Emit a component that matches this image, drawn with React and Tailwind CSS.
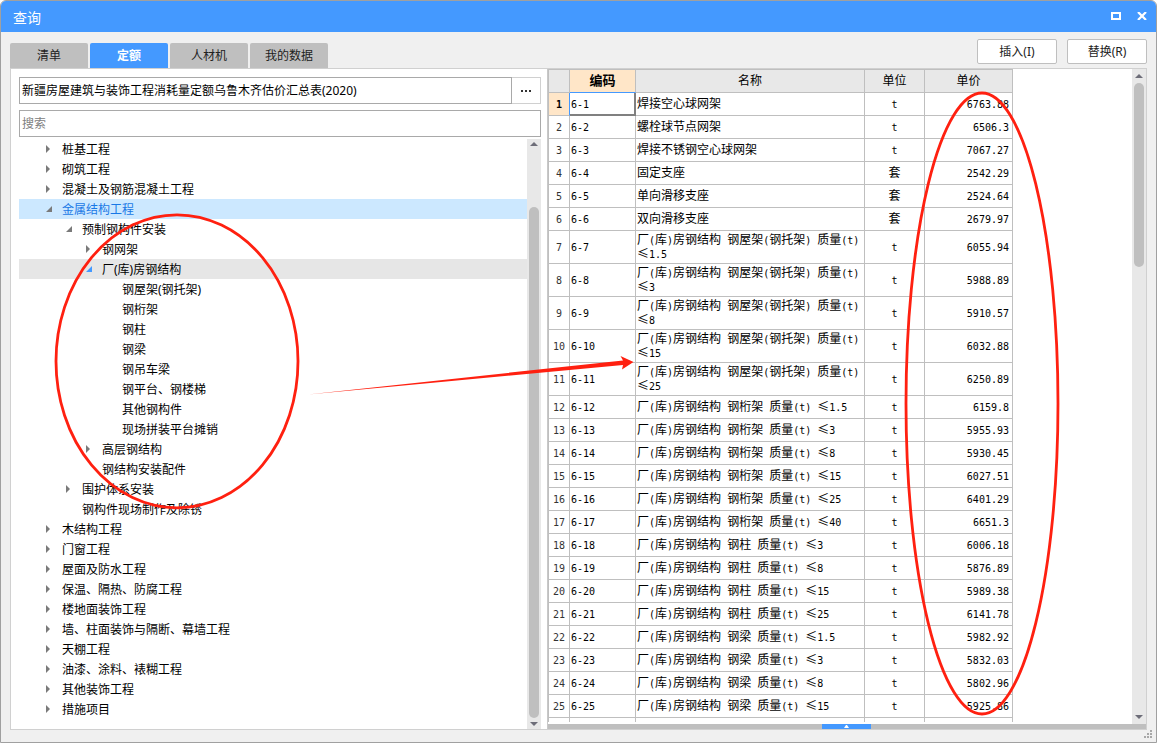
import { Fragment, useState } from 'react';

const TABS = ['清单', '定额', '人材机', '我的数据'];

// state: 'closed' | 'open' | undefined (leaf)
const TREE = [
    { label: '桩基工程', level: 0, state: 'closed' },
    { label: '砌筑工程', level: 0, state: 'closed' },
    { label: '混凝土及钢筋混凝土工程', level: 0, state: 'closed' },
    { label: '金属结构工程', level: 0, state: 'open' },
    { label: '预制钢构件安装', level: 1, state: 'open' },
    { label: '钢网架', level: 2, state: 'closed' },
    { label: '厂(库)房钢结构', level: 2, state: 'open' },
    { label: '钢屋架(钢托架)', level: 3 },
    { label: '钢桁架', level: 3 },
    { label: '钢柱', level: 3 },
    { label: '钢梁', level: 3 },
    { label: '钢吊车梁', level: 3 },
    { label: '钢平台、钢楼梯', level: 3 },
    { label: '其他钢构件', level: 3 },
    { label: '现场拼装平台摊销', level: 3 },
    { label: '高层钢结构', level: 2, state: 'closed' },
    { label: '钢结构安装配件', level: 2 },
    { label: '围护体系安装', level: 1, state: 'closed' },
    { label: '钢构件现场制作及除锈', level: 1 },
    { label: '木结构工程', level: 0, state: 'closed' },
    { label: '门窗工程', level: 0, state: 'closed' },
    { label: '屋面及防水工程', level: 0, state: 'closed' },
    { label: '保温、隔热、防腐工程', level: 0, state: 'closed' },
    { label: '楼地面装饰工程', level: 0, state: 'closed' },
    { label: '墙、柱面装饰与隔断、幕墙工程', level: 0, state: 'closed' },
    { label: '天棚工程', level: 0, state: 'closed' },
    { label: '油漆、涂料、裱糊工程', level: 0, state: 'closed' },
    { label: '其他装饰工程', level: 0, state: 'closed' },
    { label: '措施项目', level: 0, state: 'closed' },
];

const INDENT = ['pl-[26px]', 'pl-[46px]', 'pl-[66px]', 'pl-[86px]'];

const ROWS = [
    ['焊接空心球网架', 't', '6763.88'],
    ['螺栓球节点网架', 't', '6506.3'],
    ['焊接不锈钢空心球网架', 't', '7067.27'],
    ['固定支座', '套', '2542.29'],
    ['单向滑移支座', '套', '2524.64'],
    ['双向滑移支座', '套', '2679.97'],
    ['厂(库)房钢结构 钢屋架(钢托架) 质量(t) ≤1.5', 't', '6055.94'],
    ['厂(库)房钢结构 钢屋架(钢托架) 质量(t) ≤3', 't', '5988.89'],
    ['厂(库)房钢结构 钢屋架(钢托架) 质量(t) ≤8', 't', '5910.57'],
    ['厂(库)房钢结构 钢屋架(钢托架) 质量(t) ≤15', 't', '6032.88'],
    ['厂(库)房钢结构 钢屋架(钢托架) 质量(t) ≤25', 't', '6250.89'],
    ['厂(库)房钢结构 钢桁架 质量(t) ≤1.5', 't', '6159.8'],
    ['厂(库)房钢结构 钢桁架 质量(t) ≤3', 't', '5955.93'],
    ['厂(库)房钢结构 钢桁架 质量(t) ≤8', 't', '5930.45'],
    ['厂(库)房钢结构 钢桁架 质量(t) ≤15', 't', '6027.51'],
    ['厂(库)房钢结构 钢桁架 质量(t) ≤25', 't', '6401.29'],
    ['厂(库)房钢结构 钢桁架 质量(t) ≤40', 't', '6651.3'],
    ['厂(库)房钢结构 钢柱 质量(t) ≤3', 't', '6006.18'],
    ['厂(库)房钢结构 钢柱 质量(t) ≤8', 't', '5876.89'],
    ['厂(库)房钢结构 钢柱 质量(t) ≤15', 't', '5989.38'],
    ['厂(库)房钢结构 钢柱 质量(t) ≤25', 't', '6141.78'],
    ['厂(库)房钢结构 钢梁 质量(t) ≤1.5', 't', '5982.92'],
    ['厂(库)房钢结构 钢梁 质量(t) ≤3', 't', '5832.03'],
    ['厂(库)房钢结构 钢梁 质量(t) ≤8', 't', '5802.96'],
    ['厂(库)房钢结构 钢梁 质量(t) ≤15', 't', '5925.86'],
];

// Half-width runs use a monospaced face at half the CJK advance,
// the ≤ sign takes the full-width CJK form
function GridText({ text }) {
    return text.split(/([\x20-\x7e]+|≤)/).map((part, i) => {
        if (part === '≤') return <span key={i} className="font-['Noto_Sans_CJK_SC',sans-serif] leading-none">{part}</span>;
        if (i % 2) return <span key={i} className="font-['DejaVu_Sans_Mono',monospace] text-[10px] leading-none">{part}</span>;
        return <Fragment key={i}>{part}</Fragment>;
    });
}

function TreeArrow({ state, active }) {
    return (
        <svg width="8" height="8" viewBox="0 0 8 8" className="shrink-0" aria-hidden="true">
            {state === 'closed' && <path d="M1 0v8l4-4z" fill="#7a7a7a" />}
            {state === 'open' && <path d="M7 1v6H1z" fill={active ? '#4499ff' : '#7a7a7a'} />}
        </svg>
    );
}

function ScrollArrow({ down }) {
    return (
        <svg width="8" height="4" viewBox="0 0 8 4" className="shrink-0" aria-hidden="true">
            <path d={down ? 'M0 0h8L4 4z' : 'M0 4h8L4 0z'} fill="#6d6d78" />
        </svg>
    );
}

// ── Left side: library picker, search, chapter tree ───────────────────────
function LibraryPanel() {
    const [keyword, setKeyword] = useState('');

    return (
        <section className="flex w-[537px] shrink-0 flex-col border-r border-[#c8c8c8] pl-2 pr-[6px] pt-2">
            <div className="flex h-[27px] shrink-0">
                <input
                    aria-label="定额库"
                    readOnly
                    value="新疆房屋建筑与装饰工程消耗量定额乌鲁木齐估价汇总表(2020)"
                    className="min-w-0 flex-1 border border-[#a9a9a9] px-[2px] outline-none"
                />
                <button aria-label="选择定额库" className="flex w-[29px] items-center justify-center gap-[2px] border border-l-0 border-[#d0d0d0]">
                    <span className="size-[2px] bg-[#333]" />
                    <span className="size-[2px] bg-[#333]" />
                    <span className="size-[2px] bg-[#333]" />
                </button>
            </div>
            <input
                aria-label="搜索"
                placeholder="搜索"
                value={keyword}
                onChange={e => setKeyword(e.target.value)}
                className="mt-[6px] h-[27px] shrink-0 border border-[#a9a9a9] px-[2px] outline-none placeholder:text-[#808080]"
            />
            <div className="mt-[2px] flex min-h-0 flex-1">
                <ul className="min-w-0 flex-1 overflow-hidden">
                    {TREE.map((node, i) => (
                        <li key={node.label}>
                            <button
                                className={`flex h-5 w-full items-center gap-[9px] text-left hover:bg-[#e5e5e5] ${INDENT[node.level]} ${i === 3 ? 'bg-[#cce8ff] text-[#1a78e6]' : ''} ${i === 6 ? 'bg-[#e6e6e6]' : ''}`}
                            >
                                <TreeArrow state={node.state} active={i === 6} />
                                <span className="pt-[2px]">{node.label}</span>
                            </button>
                        </li>
                    ))}
                </ul>
                <div className="flex w-[14px] shrink-0 flex-col items-center bg-[#e8e8e8] py-[3px]">
                    <ScrollArrow />
                    <div className="mt-[61px] mb-1 w-[10px] flex-1 rounded-full bg-[#bfbfbf]" />
                    <ScrollArrow down />
                </div>
            </div>
        </section>
    );
}

// ── Right side: quota table ───────────────────────────────────────────────
function QuotaTable() {
    const th = 'border-r border-b border-[#bfbfbf] bg-[#e8e8e8] p-0 font-normal';
    const td = 'border-r border-b border-[#bfbfbf] p-0 pb-px';

    return (
        <section className="flex min-w-0 flex-1 flex-col">
            <div className="flex min-h-0 flex-1">
                <div className="mb-[2px] min-w-0 flex-1 overflow-hidden">
                    <table className="w-[465px] table-fixed border-separate border-spacing-0 border-t border-l border-[#bfbfbf] font-['Liberation_Sans','Noto_Sans_CJK_SC',sans-serif] leading-[14px]">
                        <colgroup>
                            <col className="w-[21px]" />
                            <col className="w-[66px]" />
                            <col className="w-[229px]" />
                            <col className="w-[60px]" />
                            <col className="w-[88px]" />
                        </colgroup>
                        <thead>
                            <tr className="h-[23px]">
                                <th className={th} aria-label="序号" />
                                <th className="border-r border-b border-r-[#bfbfbf] border-b-[#4499ff] bg-[#ffe6c8] p-0 text-[13px] font-bold">编码</th>
                                <th className={th}>名称</th>
                                <th className={th}>单位</th>
                                <th className={th}>单价</th>
                            </tr>
                        </thead>
                        <tbody>
                            {ROWS.map(([name, unit, price], i) => (
                                <tr key={i} className={name.includes('钢屋架') ? 'h-[33px]' : 'h-[23px]'}>
                                    <th
                                        scope="row"
                                        className={`border-r border-b p-0 pt-[2px] font-['DejaVu_Sans_Mono',monospace] text-[10px] leading-[14px] ${i === 0 ? 'border-r-[#4499ff] border-b-[#bfbfbf] bg-[#ffe6c8] font-bold' : 'border-[#bfbfbf] font-normal text-[#333]'}`}
                                    >
                                        {i + 1}
                                    </th>
                                    <td className={i === 0 ? 'border-r-2 border-b-2 border-[#808080] p-0 pl-[1px]' : `${td} pl-[1px]`}>
                                        <GridText text={`6-${i + 1}`} />
                                    </td>
                                    <td className={`${td} pl-[1px]`}><GridText text={name} /></td>
                                    <td className={`${td} text-center`}><GridText text={unit} /></td>
                                    <td className={`${td} pr-[3px] text-right`}><GridText text={price} /></td>
                                </tr>
                            ))}
                            <tr className="h-[23px]">
                                {TABS.map(t => <td key={t} className={td} />)}
                                <td className={td} />
                            </tr>
                        </tbody>
                    </table>
                </div>
                <div className="flex w-[14px] shrink-0 flex-col items-center bg-[#e8e8e8] py-[5px]">
                    <ScrollArrow />
                    <div className="mt-[5px] h-[184px] w-[10px] rounded-full bg-[#bfbfbf]" />
                    <div className="flex-1" />
                    <ScrollArrow down />
                </div>
            </div>
            <div className="flex h-[5px] shrink-0 justify-center bg-[#bfbfbf] pr-[2px]">
                <button aria-label="展开" className="flex w-[49px] items-center justify-center bg-[#4499ff]">
                    <svg width="5" height="3" viewBox="0 0 5 3" aria-hidden="true"><path d="M0 3h5L3 0H2z" fill="#fff" /></svg>
                </button>
            </div>
        </section>
    );
}

// Red pen marks drawn over the window
function Marks() {
    return (
        <svg width="1157" height="743" viewBox="0 0 1157 743" className="pointer-events-none absolute -top-px -left-px" aria-hidden="true">
            <ellipse cx="177" cy="361.300" rx="121" ry="146.500" fill="none" stroke="#ff2010" strokeWidth="2.800" />
            <ellipse cx="982" cy="403.500" rx="76" ry="310.500" fill="none" stroke="#ff2010" strokeWidth="2.800" />
            <path d="M308 394.500L623 360.400L620.500 356L633.500 362L622 369.500L623 364.900Z" fill="#ff2010" />
        </svg>
    );
}

export default function App() {
    const [tab, setTab] = useState('定额');

    return (
        <div className="relative flex h-screen flex-col overflow-hidden rounded-t-md border border-[#a0a0a0] bg-[#f0f0f0] font-['Noto_Sans','Noto_Sans_CJK_SC',sans-serif] text-xs text-black">
            <header className="flex h-[31px] shrink-0 items-center justify-between bg-[#4499ff] pr-[9px] pl-3 text-white">
                <h1 className="pt-[2px] text-sm">查询</h1>
                <div className="flex items-center gap-4 pb-[2px]">
                    <button aria-label="最大化">
                        <svg width="10" height="8" viewBox="0 0 10 8" aria-hidden="true"><path d="M1 1h8v6H1z" fill="none" stroke="#fff" strokeWidth="2" /></svg>
                    </button>
                    <button aria-label="关闭">
                        <svg width="10" height="8" viewBox="0 0 10 8" aria-hidden="true"><path d="M1 0l8 8M9 0L1 8" stroke="#fff" strokeWidth="2.200" /></svg>
                    </button>
                </div>
            </header>

            <div className="flex h-9 shrink-0 items-end justify-between px-[9px]">
                <div role="tablist" className="flex gap-[2px]">
                    {TABS.map(t => (
                        <button
                            key={t}
                            role="tab"
                            aria-selected={t === tab}
                            onClick={() => setTab(t)}
                            className={`h-[25px] w-[78px] rounded-t-xs pt-px ${t === tab ? 'bg-[#4499ff] font-bold text-white' : 'bg-[#bfbfbf] text-[#222]'}`}
                        >
                            {t}
                        </button>
                    ))}
                </div>
                <div className="mb-1 flex gap-[10px]">
                    <button className="h-[25px] w-20 rounded-xs border border-[#bfbfbf] bg-white text-[#222]">插入(I)</button>
                    <button className="h-[25px] w-20 rounded-xs border border-[#bfbfbf] bg-white text-[#222]">替换(R)</button>
                </div>
            </div>

            <main className="mr-[9px] ml-[9px] flex min-h-0 flex-1 border border-[#d0d0d0] bg-white">
                <LibraryPanel />
                <QuotaTable />
            </main>

            <footer className="flex h-3 shrink-0 justify-end pr-1">
                <svg width="8" height="8" viewBox="0 0 8 8" aria-hidden="true">
                    <path d="M6 0h2v2H6zM3 3h2v2H3zM6 3h2v2H6zM0 6h2v2H0zM3 6h2v2H3zM6 6h2v2H6z" fill="#a8a8a8" />
                </svg>
            </footer>
            <Marks />
        </div>
    );
}
